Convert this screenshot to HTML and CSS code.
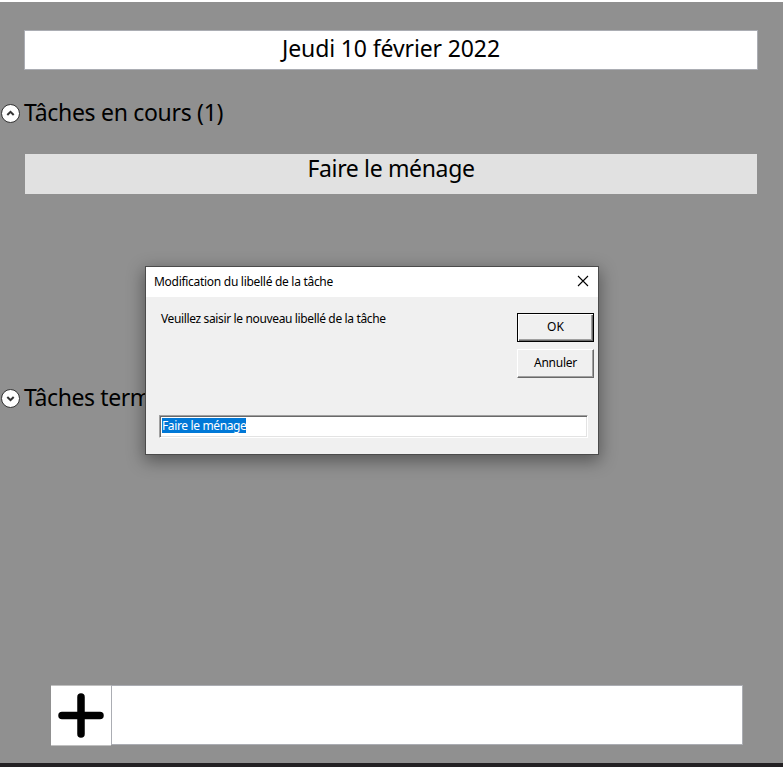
FILE: index.html
```
<!DOCTYPE html>
<html lang="fr">
<head>
<meta charset="utf-8">
<title>Tâches</title>
<link rel="stylesheet" href="styles.css">
</head>
<body>
<main class="app">
  <h1 class="date"><span class="date-text">Jeudi 10 février 2022</span></h1>
  <section class="group current">
    <h2 class="group-header">
      <svg class="toggle" viewBox="0 0 20 20"><circle cx="9.5" cy="9.5" r="9" /><path d="M6.3 11 9.5 7.8l3.2 3.2" /></svg>
      <span class="current-label">Tâches en cours (1)</span>
    </h2>
    <div class="task"><span class="task-text">Faire le ménage</span></div>
  </section>
  <section class="group">
    <h2 class="group-header">
      <svg class="toggle" viewBox="0 0 20 20"><circle cx="9.5" cy="9.5" r="9" /><path d="M6.3 8 9.5 11.2l3.2-3.2" /></svg>
      <span class="done-label">Tâches terminées</span>
    </h2>
  </section>
  <div class="add-row">
    <div class="add-button"><svg viewBox="0 0 60 60"><path d="M30 12v37M11 30.5h38" /></svg></div>
    <div class="add-input"></div>
  </div>
</main>
<div class="dialog">
  <header class="titlebar">
    <span class="title">Modification du libellé de la tâche</span>
    <svg class="close" viewBox="0 0 12 12"><path d="M1 1l10 10M11 1 1 11" /></svg>
  </header>
  <div class="dialog-body">
    <p class="prompt"><span class="prompt-text">Veuillez saisir le nouveau libellé de la tâche</span></p>
    <div class="actions">
      <div class="button default"><span class="button-face">OK</span></div>
      <div class="button"><span class="annuler">Annuler</span></div>
    </div>
  </div>
  <div class="field"><span class="selection">Faire le ménage</span></div>
</div>
</body>
</html>
```
FILE: styles.css
```
* { box-sizing: border-box; }
body {
  margin: 0;
  height: 767px;
  overflow: hidden;
  background: #909090;
  color: #000;
  font-family: "Noto Sans", "Open Sans", sans-serif;
}
.app {
  height: 767px;
  display: flex;
  flex-direction: column;
  border-top: 2px solid #fff;
  border-bottom: 4px solid #232123;
}
h1, h2, p { margin: 0; font-weight: 400; }
.date, .task, .group-header { font-size: 23px; line-height: 32px; white-space: nowrap; }
.date {
  height: 40px;
  margin: 28px 25px 0 24px;
  padding-top: 1px;
  background: #fff;
  border: 1px solid #abadb3;
  text-align: center;
}
.date-text { letter-spacing: -0.12px; }
.current { margin-top: 27px; height: 285px; }
.group-header { display: flex; align-items: center; height: 32px; line-height: 30px; }
.group-header span { margin-top: -2px; }
.toggle { width: 20px; height: 20px; margin: 1px 3px 0 1px; flex: none; }
.toggle circle { fill: #fff; stroke: #333; }
.toggle path { fill: none; stroke: #333; stroke-width: 2; }
.current-label { letter-spacing: -0.3px; }
.done-label { letter-spacing: -0.4px; }
.task {
  height: 40px;
  margin: 25px 26px 0 25px;
  background: #e1e1e1;
  text-align: center;
  line-height: 29px;
}
.task-text { letter-spacing: -0.35px; }
.add-row {
  display: flex;
  align-items: flex-start;
  margin: auto 40px 17px 51px;
}
.add-button { width: 60px; height: 61px; background: #fff; border: solid #c0c0c0; border-width: 1px 0; }
.add-button svg { display: block; width: 60px; height: 60px; margin-top: -1px; }
.add-button path { stroke: #000; stroke-width: 7.5; stroke-linecap: round; }
.add-input { flex: 1; height: 60px; background: #fff; border: 1px solid #abadb3; }

.dialog {
  position: absolute;
  left: 145px;
  top: 266px;
  width: 454px;
  height: 189px;
  background: #f0f0f0;
  border: 1px solid #4b4b4b;
  box-shadow: 0 5px 16px 1px rgba(0, 0, 0, 0.4);
  font-size: 12px;
  line-height: 16px;
  white-space: nowrap;
}
.title { letter-spacing: -0.29px; }
.prompt-text { letter-spacing: -0.36px; }
.annuler { letter-spacing: -0.25px; }
.titlebar {
  display: flex;
  justify-content: space-between;
  height: 30px;
  padding: 7px 9px 0 8px;
  background: #fff;
}
.close { width: 12px; height: 12px; margin-top: 1px; }
.close path { stroke: #000; fill: none; stroke-width: 1.1; }
.dialog-body {
  display: flex;
  justify-content: space-between;
  height: 118px;
  padding: 14px 4px 0 15px;
}
.actions { display: flex; flex-direction: column; gap: 7px; width: 77px; padding-top: 2px; }
.button {
  height: 29px;
  border: 1px solid;
  border-color: #fff #696969 #696969 #fff;
  box-shadow: inset -1px -1px #a0a0a0;
  line-height: 25px;
  text-align: center;
}
.default { border-color: #000; box-shadow: inset 1px 1px #fff, inset -1px -1px #696969, inset -2px -2px #a0a0a0; }
.field {
  width: 429px;
  height: 23px;
  margin-left: 13px;
  padding: 1px;
  background: #fff;
  border: 1px solid;
  border-color: #a0a0a0 #fff #fff #a0a0a0;
  box-shadow: inset 1px 1px #696969, inset -1px -1px #e3e3e3;
}
.selection {
  display: block;
  width: 84px;
  height: 15px;
  margin: 1px 0 0 1px;
  background: #0078d7;
  color: #fff;
  line-height: 15px;
  letter-spacing: -0.36px;
}
```
